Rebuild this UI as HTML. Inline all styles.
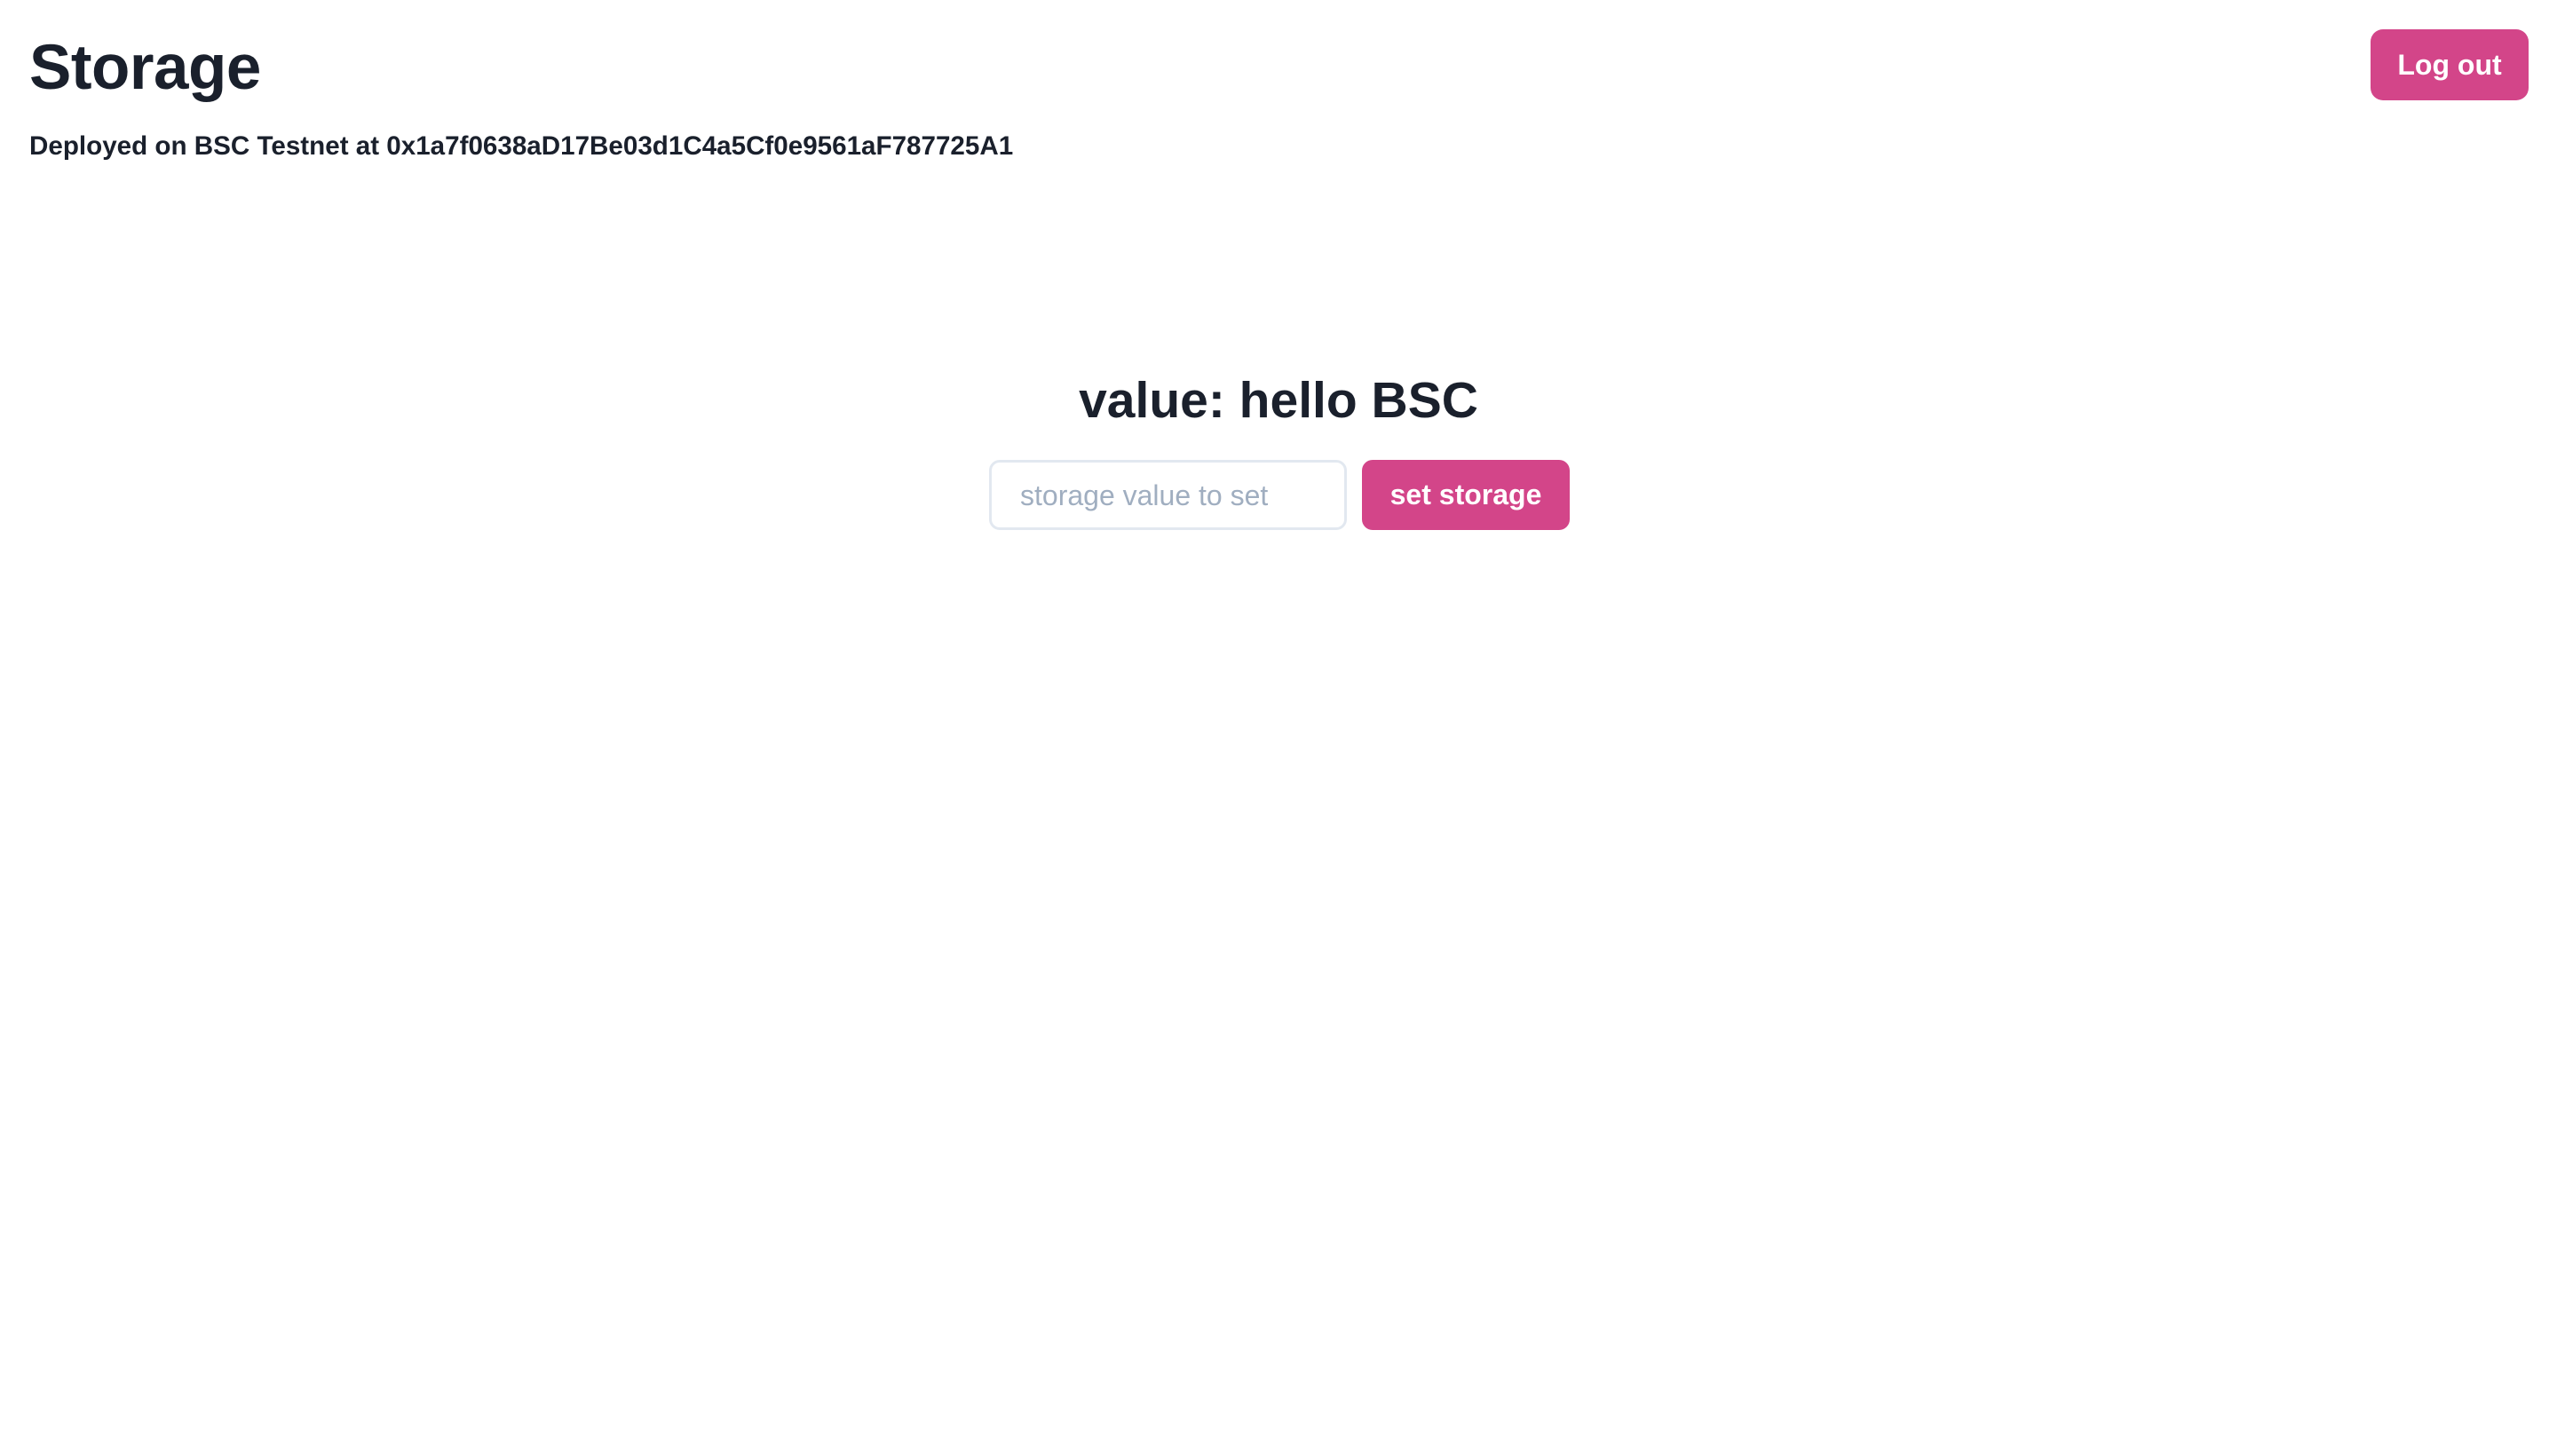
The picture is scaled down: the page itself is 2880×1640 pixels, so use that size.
<!DOCTYPE html>
<html><head><meta charset="utf-8"><style>
html,body{margin:0;padding:0;background:#fff;width:2880px;height:1640px;overflow:hidden;font-family:"Liberation Sans",sans-serif;color:#1a202c}
.t{position:absolute;left:33px;top:29px;font-size:71px;font-weight:bold;line-height:96px;margin:0;letter-spacing:-0.5px}
.d{position:absolute;left:33px;top:145px;font-size:29.6px;font-weight:bold;line-height:40px}
.lo{position:absolute;left:2670px;top:33px;width:178px;height:80px;background:#d34589;border-radius:14px;color:#fff;font-size:32px;font-weight:bold;display:flex;align-items:center;justify-content:center}
.v{position:absolute;left:0;width:2880px;top:411px;text-align:center;font-size:57px;font-weight:bold;line-height:80px}
.in{position:absolute;left:1114px;top:518px;width:403px;height:79px;box-sizing:border-box;border:3px solid #e2e8f0;border-radius:12px;color:#a0aec0;font-size:32px;padding-left:32px;line-height:75px}
.b{position:absolute;left:1534px;top:518px;width:234px;height:79px;background:#d34589;border-radius:12px;color:#fff;font-size:32px;font-weight:bold;display:flex;align-items:center;justify-content:center}
</style></head><body>
<h1 class="t">Storage</h1>
<div class="d">Deployed on BSC Testnet at 0x1a7f0638aD17Be03d1C4a5Cf0e9561aF787725A1</div>
<div class="lo">Log out</div>
<div class="v">value: hello BSC</div>
<div class="in">storage value to set</div>
<div class="b">set storage</div>
</body></html>
